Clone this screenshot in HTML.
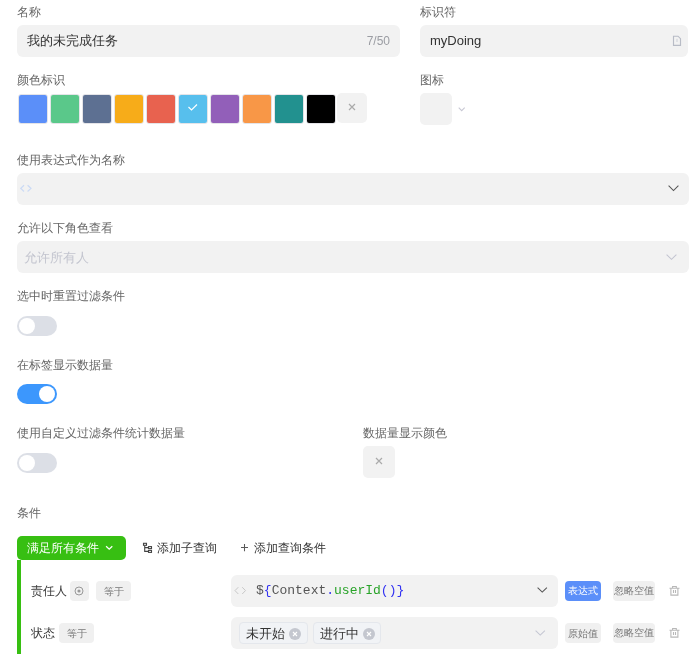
<!DOCTYPE html>
<html><head><meta charset="utf-8">
<style>
*{box-sizing:border-box;margin:0;padding:0}
html,body{width:698px;height:663px;overflow:hidden;background:#fff}
body{font-family:"Liberation Sans",sans-serif;position:relative;color:#333;-webkit-font-smoothing:antialiased;will-change:transform}
.a{position:absolute}
.lbl{position:absolute;font-size:12px;line-height:18px;color:#666;white-space:nowrap}
.inp{position:absolute;background:#f2f2f2;border-radius:6px;height:32px}
.sw{position:absolute;top:94px;width:30px;height:30px;border:1px solid #e4e4e8;border-radius:3px}
.sw i{display:block;width:28px;height:28px;border-radius:2px}
.tog{position:absolute;width:40px;height:20px;border-radius:10px;background:#dcdfe6}
.tog i{position:absolute;top:2px;left:2px;width:16px;height:16px;border-radius:50%;background:#fff}
.tag{position:absolute;height:20px;border-radius:4px;background:#f0f0f0;color:#777;font-size:9.6px;line-height:20px;text-align:center;white-space:nowrap;padding-top:0.8px}
</style></head><body>

<div class="lbl" style="left:17px;top:3px">名称</div>
<div class="inp" style="left:17px;top:25px;width:383px">
  <div class="a" style="left:10px;top:0;font-size:13px;line-height:32px;color:#333">我的未完成任务</div>
  <div class="a" style="right:10px;top:0;font-size:12px;line-height:32px;color:#9b9da3">7/50</div>
</div>

<div class="lbl" style="left:420px;top:3px">标识符</div>
<div class="inp" style="left:420px;top:25px;width:268px">
  <div class="a" style="left:10px;top:0;font-size:13px;line-height:32px;color:#333">myDoing</div>
  <svg class="a" style="left:252px;top:9.5px" width="10" height="12" viewBox="0 0 10 12"><path d="M1.5 1.2h4.5l2.5 2.5v6.6h-7z" fill="none" stroke="#b8bcc6" stroke-width="1.15"/><path d="M5 3.8v3.2" stroke="#cdd0d8" stroke-width="1"/></svg>
</div>

<div class="lbl" style="left:17px;top:71px">颜色标识</div>
<div class="sw" style="left:18px"><i style="background:#5b8ff9"></i></div>
<div class="sw" style="left:50px"><i style="background:#5ac88a"></i></div>
<div class="sw" style="left:82px"><i style="background:#5d7092"></i></div>
<div class="sw" style="left:114px"><i style="background:#f7ac19"></i></div>
<div class="sw" style="left:146px"><i style="background:#e8624f"></i></div>
<div class="sw" style="left:178px"><i style="background:#57bfed"></i>
  <svg class="a" style="left:8px;top:8px" width="12" height="9" viewBox="0 0 12 9"><path d="M1.5 4l3 3 5.5-5.5" fill="none" stroke="#fff" stroke-width="1.15"/></svg></div>
<div class="sw" style="left:210px"><i style="background:#925fb9"></i></div>
<div class="sw" style="left:242px"><i style="background:#f89747"></i></div>
<div class="sw" style="left:274px"><i style="background:#22918f"></i></div>
<div class="sw" style="left:306px"><i style="background:#000"></i></div>
<div class="a" style="left:337px;top:93px;width:30px;height:30px;background:#f2f2f2;border-radius:5px">
  <svg class="a" style="left:11px;top:10px" width="8" height="8" viewBox="0 0 8 8"><path d="M1 1l6 6M7 1l-6 6" stroke="#aaa" stroke-width="1.2"/></svg>
</div>

<div class="lbl" style="left:420px;top:71px">图标</div>
<div class="a" style="left:420px;top:93px;width:32px;height:32px;background:#f2f2f2;border-radius:5px"></div>
<svg class="a" style="left:457.5px;top:106.5px" width="8" height="5" viewBox="0 0 8 5"><path d="M0.7 0.7l3 3 3-3" fill="none" stroke="#c8c8d4" stroke-width="1.1"/></svg>

<div class="lbl" style="left:17px;top:151px">使用表达式作为名称</div>
<div class="inp" style="left:17px;top:173px;width:672px">
  <svg class="a" style="left:3px;top:11px" width="13" height="9" viewBox="0 0 13 9"><path d="M4 1.2L0.8 4.35 4 7.5M7.6 1.2L11 4.35 7.6 7.5" fill="none" stroke="#cbdaf5" stroke-width="1.2"/></svg>
  <svg class="a" style="left:651px;top:12px" width="12" height="7" viewBox="0 0 12 7"><path d="M0.6 0.6L5.5 5.5 10.4 0.6" fill="none" stroke="#555" stroke-width="1.05"/></svg>
</div>

<div class="lbl" style="left:17px;top:219px">允许以下角色查看</div>
<div class="inp" style="left:17px;top:241px;width:672px">
  <div class="a" style="left:6.5px;top:0.5px;font-size:13px;line-height:32px;color:#c3c5cf">允许所有人</div>
  <svg class="a" style="left:649px;top:13px" width="12" height="7" viewBox="0 0 12 7"><path d="M0.6 0.6L5.5 5.3 10.4 0.6" fill="none" stroke="#c2c4d0" stroke-width="1.05"/></svg>
</div>

<div class="lbl" style="left:17px;top:287px">选中时重置过滤条件</div>
<div class="tog" style="left:17px;top:316px"><i></i></div>

<div class="lbl" style="left:17px;top:356px">在标签显示数据量</div>
<div class="tog" style="left:17px;top:384px;background:#3c97fd"><i style="left:22px"></i></div>

<div class="lbl" style="left:17px;top:424px">使用自定义过滤条件统计数据量</div>
<div class="tog" style="left:17px;top:453px"><i></i></div>

<div class="lbl" style="left:362.5px;top:424px">数据量显示颜色</div>
<div class="a" style="left:363px;top:446px;width:32px;height:32px;background:#f2f2f2;border-radius:5px">
  <svg class="a" style="left:12px;top:11.3px" width="8" height="8" viewBox="0 0 8 8"><path d="M1 1l6 6M7 1l-6 6" stroke="#aaa" stroke-width="1.2"/></svg>
</div>

<div class="lbl" style="left:17px;top:504px">条件</div>

<div class="a" style="left:17px;top:536px;width:109px;height:24px;background:#37bf12;border-radius:5px;color:#fff;font-size:12px;line-height:24px;padding-left:10px">满足所有条件
  <svg class="a" style="left:88px;top:9px" width="9" height="6" viewBox="0 0 9 6"><path d="M1.1 1.2l3.1 3 3.1-3" fill="none" stroke="#fff" stroke-width="1.25"/></svg>
</div>
<div class="a" style="left:17px;top:560px;width:4px;height:94px;background:#37bf12"></div>

<svg class="a" style="left:142px;top:542px" width="12" height="12" viewBox="0 0 12 12"><g fill="none" stroke="#444" stroke-width="1.1"><rect x="1.5" y="1.3" width="3" height="2"/><path d="M2.7 3.8V9.4H6.5M2.7 5.6H6.5"/><rect x="6.5" y="4.6" width="3" height="2"/><rect x="6.5" y="8.4" width="3" height="2"/></g></svg>
<div class="a" style="left:157px;top:539px;font-size:12px;line-height:18px;color:#333">添加子查询</div>
<svg class="a" style="left:240px;top:543px" width="9" height="9" viewBox="0 0 9 9"><path d="M4.5 1V8.2M1 4.5H8" fill="none" stroke="#5a5a5a" stroke-width="1.05"/></svg>
<div class="a" style="left:253.5px;top:539px;font-size:12px;line-height:18px;color:#333">添加查询条件</div>

<div class="a" style="left:30.7px;top:582px;font-size:12px;line-height:18px;color:#3a3a3a">责任人</div>
<div class="tag" style="left:69.5px;top:581px;width:19px"><svg class="a" style="left:4.5px;top:5px" width="10" height="10" viewBox="0 0 10 10"><circle cx="5" cy="5" r="4" fill="none" stroke="#999" stroke-width="1"/><circle cx="5" cy="5" r="1.6" fill="#999"/></svg></div>
<div class="tag" style="left:96px;top:581px;width:35px">等于</div>
<div class="inp" style="left:231px;top:575px;width:327px">
  <svg class="a" style="left:3px;top:11px" width="13" height="9" viewBox="0 0 13 9"><path d="M4.3 1.2L1 4.6 4.3 8M8.2 1.2L11.5 4.6 8.2 8" fill="none" stroke="#c8c8c8" stroke-width="1"/></svg>
  <div class="a" style="left:25px;top:0;font-family:'Liberation Mono',monospace;font-size:13px;line-height:31.4px;color:#555">$<span style="color:#3333f2">{</span>Context<span style="color:#3333f2">.</span><span style="color:#29a329">userId</span><span style="color:#3333f2">()}</span></div>
  <svg class="a" style="left:306px;top:12px" width="12" height="7" viewBox="0 0 12 7"><path d="M0.6 0.6L5.25 5.1 9.9 0.6" fill="none" stroke="#555" stroke-width="1.05"/></svg>
</div>
<div class="tag" style="left:564.7px;top:580.6px;width:36px;height:20.6px;line-height:20.5px;background:#5b8ff9;color:#fff">表达式</div>
<div class="tag" style="left:612.7px;top:580.5px;width:42.7px;height:20.5px;line-height:20.5px">忽略空值</div>
<svg class="a" style="left:668px;top:585px" width="13" height="12" viewBox="0 0 13 12"><path d="M4.6 3.2V1.5H8.3V3.2M1.5 3.3H11.5M2.9 3.5V10.1H9.9V3.5M5.5 5V8M7.5 5V8" fill="none" stroke="#b8b8b8" stroke-width="1.1"/></svg>

<div class="a" style="left:30.7px;top:624px;font-size:12px;line-height:18px;color:#3a3a3a">状态</div>
<div class="tag" style="left:59.3px;top:623.4px;width:35px">等于</div>
<div class="inp" style="left:231px;top:617px;width:327px">
  <div class="a" style="left:7.5px;top:5.2px;height:21.5px;width:69px;border:1px solid #e4e7ec;background:#f1f3f6;border-radius:4px;font-size:13px;line-height:21px;padding-left:6.5px;color:#333">未开始<svg class="a" style="left:49.5px;top:4.8px" width="12" height="12" viewBox="0 0 12 12"><circle cx="6" cy="6" r="6" fill="#c4c7cf"/><path d="M4 4l4 4M8 4l-4 4" stroke="#fff" stroke-width="1.1"/></svg></div>
  <div class="a" style="left:81.7px;top:5.2px;height:21.5px;width:68.5px;border:1px solid #e4e7ec;background:#f1f3f6;border-radius:4px;font-size:13px;line-height:21px;padding-left:6.5px;color:#333">进行中<svg class="a" style="left:49.5px;top:4.8px" width="12" height="12" viewBox="0 0 12 12"><circle cx="6" cy="6" r="6" fill="#c4c7cf"/><path d="M4 4l4 4M8 4l-4 4" stroke="#fff" stroke-width="1.1"/></svg></div>
  <svg class="a" style="left:304px;top:13px" width="12" height="7" viewBox="0 0 12 7"><path d="M0.6 0.6L5.25 5.1 9.9 0.6" fill="none" stroke="#c4c6d2" stroke-width="1.05"/></svg>
</div>
<div class="tag" style="left:564.5px;top:623px;width:36px">原始值</div>
<div class="tag" style="left:612.7px;top:622.7px;width:42.7px;height:20.5px;line-height:20.5px">忽略空值</div>
<svg class="a" style="left:668px;top:627px" width="13" height="12" viewBox="0 0 13 12"><path d="M4.6 3.2V1.5H8.3V3.2M1.5 3.3H11.5M2.9 3.5V10.1H9.9V3.5M5.5 5V8M7.5 5V8" fill="none" stroke="#b8b8b8" stroke-width="1.1"/></svg>

</body></html>
